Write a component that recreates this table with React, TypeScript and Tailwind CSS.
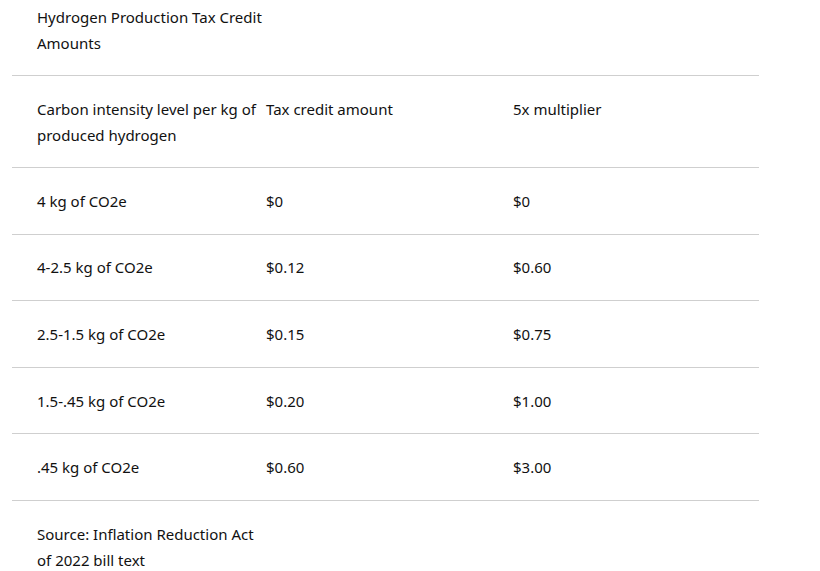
const rows = [
  ['4 kg of CO2e', '$0', '$0'],
  ['4-2.5 kg of CO2e', '$0.12', '$0.60'],
  ['2.5-1.5 kg of CO2e', '$0.15', '$0.75'],
  ['1.5-.45 kg of CO2e', '$0.20', '$1.00'],
  ['.45 kg of CO2e', '$0.60', '$3.00'],
]

export default function App() {
  return (
    <div className="min-h-[571px] bg-white pl-[12px] text-[15px] leading-[26px] text-[#111]" style={{ fontFamily: '"Noto Sans", "Noto Sans CJK KR", sans-serif' }}>
      <div className="w-[747px]">
        <div className="h-[76px] border-b border-[#cfcfcf] pt-[4px] pl-[25px]">
          <div className="w-[230px]">Hydrogen Production Tax Credit Amounts</div>
        </div>
        <div className="grid h-[92px] grid-cols-[250px_247px_250px] items-center border-b border-[#cfcfcf]">
          <div className="pl-[25px] pr-[4px]">Carbon intensity level per kg of produced hydrogen</div>
          <div className="pl-[4px] self-start pt-[20px]">Tax credit amount</div>
          <div className="pl-[4px] self-start pt-[20px]">5x multiplier</div>
        </div>
        {rows.map(r => (
          <div key={r[0]} className="grid h-[66.6px] grid-cols-[250px_247px_250px] items-center border-b border-[#cfcfcf]">
            <div className="pl-[25px] pr-[4px]">{r[0]}</div>
            <div className="pl-[4px]">{r[1]}</div>
            <div className="pl-[4px]">{r[2]}</div>
          </div>
        ))}
        <div className="pt-[20px] pl-[25px]">
          <div className="w-[225px]">Source: Inflation Reduction Act of 2022 bill text</div>
        </div>
      </div>
    </div>
  )
}
